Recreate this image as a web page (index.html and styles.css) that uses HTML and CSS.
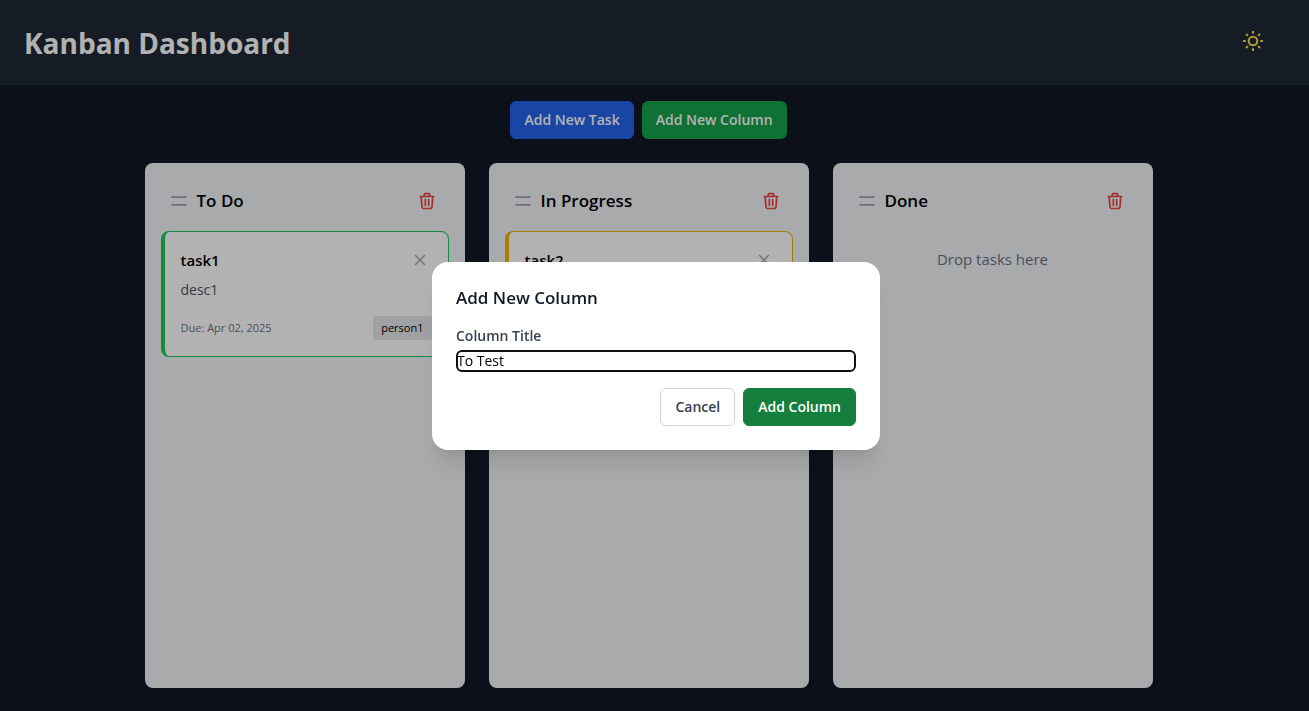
FILE: index.html
```html
<!DOCTYPE html>
<html lang="en">
<head>
<meta charset="utf-8">
<title>Kanban Dashboard</title>
<link rel="stylesheet" href="styles.css">
</head>
<body>
<svg class="sprite" aria-hidden="true">
  <symbol id="grip" viewBox="0 0 20 20"><path d="M3 6.200h14M3 13.800h14" fill="none" stroke="currentColor" stroke-width="1.700" stroke-linecap="round"/></symbol>
  <symbol id="trash" viewBox="0 0 20 20"><path d="M3.300 5.500h13.400M7.300 5.500V3.400Q7.300 2.700 8 2.700h4Q12.700 2.700 12.700 3.400v2.100M4.200 5.500l.8 10.500Q5.200 17.500 6.600 17.500h6.800Q14.800 17.500 15 16l.8-10.500M8.300 8.500v6M11.700 8.500v6" fill="none" stroke="currentColor" stroke-width="1.700" stroke-linecap="round" stroke-linejoin="round"/></symbol>
  <symbol id="cross" viewBox="0 0 16 16"><path d="M3.500 3.500l9 9M12.500 3.500l-9 9" fill="none" stroke="currentColor" stroke-width="1.400" stroke-linecap="round"/></symbol>
</svg>
<div class="app">
  <header class="topbar">
    <h1 class="topbar-title">Kanban Dashboard</h1>
    <button class="theme-button" type="button" aria-label="Toggle theme">
      <svg class="sun" viewBox="0 0 24 24" fill="none" stroke="currentColor" stroke-width="2"><circle cx="12" cy="12" r="4.300"/><path d="M12 2v2.700M12 19.300V22M2 12h2.700M19.300 12H22M5 5l1.900 1.900M17.100 17.100L19 19M5 19l1.900-1.900M17.100 6.900L19 5"/></svg>
    </button>
  </header>
  <main class="main">
    <div class="toolbar">
      <button class="button button-blue" type="button">Add New Task</button>
      <button class="button button-green" type="button">Add New Column</button>
    </div>
    <div class="board">
      <section class="column">
        <div class="column-head">
          <svg class="icon grip"><use href="#grip"/></svg>
          <h2 class="column-title">To Do</h2>
          <button class="icon-button" type="button" aria-label="Delete To Do"><svg class="icon"><use href="#trash"/></svg></button>
        </div>
        <article class="card card-green">
          <div class="card-head">
            <h3 class="card-title">task1</h3>
            <button class="close-button" type="button" aria-label="Delete task1"><svg class="icon-small"><use href="#cross"/></svg></button>
          </div>
          <p class="card-text">desc1</p>
          <div class="card-foot"><span class="due">Due: Apr 02, 2025</span><span class="chip">person1</span></div>
        </article>
      </section>
      <section class="column">
        <div class="column-head">
          <svg class="icon grip"><use href="#grip"/></svg>
          <h2 class="column-title">In Progress</h2>
          <button class="icon-button" type="button" aria-label="Delete In Progress"><svg class="icon"><use href="#trash"/></svg></button>
        </div>
        <article class="card card-yellow">
          <div class="card-head">
            <h3 class="card-title">task2</h3>
            <button class="close-button" type="button" aria-label="Delete task2"><svg class="icon-small"><use href="#cross"/></svg></button>
          </div>
        </article>
      </section>
      <section class="column">
        <div class="column-head">
          <svg class="icon grip"><use href="#grip"/></svg>
          <h2 class="column-title">Done</h2>
          <button class="icon-button" type="button" aria-label="Delete Done"><svg class="icon"><use href="#trash"/></svg></button>
        </div>
        <p class="empty">Drop tasks here</p>
      </section>
    </div>
  </main>
</div>
<div class="overlay">
  <form class="dialog" role="dialog" aria-modal="true" aria-labelledby="dialog-title">
    <h2 class="dialog-title" id="dialog-title">Add New Column</h2>
    <label class="label" for="column-title">Column Title</label>
    <input class="input" id="column-title" type="text" value="To Test">
    <div class="actions">
      <button class="button button-outline" type="button">Cancel</button>
      <button class="button button-dark" type="submit">Add Column</button>
    </div>
  </form>
</div>
</body>
</html>
```

FILE: styles.css
```css
* { box-sizing: border-box; }
body, h1, h2, h3, p { margin: 0; }
body, button, input { font-family: "Segoe UI", "Open Sans", "Noto Sans", sans-serif; }
button { cursor: pointer; }
svg { display: block; }
.sprite { position: absolute; width: 0; height: 0; }

.app { display: flex; flex-direction: column; min-height: 100vh; background: #111827; }
.topbar { display: flex; align-items: center; justify-content: space-between; padding: 25px 40px 24px 24px; background: #1f2937; }
.topbar-title { font-size: 28px; line-height: 36px; font-weight: 700; color: #fff; }
.theme-button { padding: 4px; margin: -4px 0 0; border: 0; background: none; color: #fde047; }
.sun { width: 24px; height: 24px; }

.main { flex: 1; display: flex; flex-direction: column; gap: 24px; padding: 16px 12px 23px 0; }
.toolbar { display: flex; justify-content: center; gap: 8px; }
.button { padding: 8px 13px; border: 1px solid transparent; border-radius: 6px; font-size: 14px; line-height: 20px; font-weight: 600; color: #fff; }
.button-blue { background: #2563eb; border-color: #2563eb; }
.button-green { background: #16a34a; border-color: #16a34a; }
.button-dark { background: #15803d; border-color: #15803d; }
.button-outline { background: #fff; border-color: #d1d5db; color: #374151; }

.board { flex: 1; display: flex; justify-content: center; gap: 24px; }
.column { width: 320px; padding: 16px; border-radius: 8px; background: #f3f4f6; }
.column-head { display: flex; align-items: center; gap: 8px; padding: 8px; margin-bottom: 8px; }
.column-title { flex: 1; font-size: 17px; line-height: 28px; font-weight: 600; color: #000; }
.icon { width: 20px; height: 20px; }
.grip { color: #9ca3af; }
.icon-button { padding: 4px; border: 0; background: none; color: #ef4444; }
.icon-small { width: 16px; height: 16px; }

.card { padding: 16px; border: 1px solid; border-left-width: 4px; border-radius: 8px; background: #fff; }
.card-green { border-color: #22c55e; }
.card-yellow { border-color: #eab308; }
.card-head, .card-foot { display: flex; align-items: center; justify-content: space-between; }
.card-title { font-size: 15px; line-height: 24px; font-weight: 600; color: #000; }
.close-button { padding: 4px; border: 0; background: none; color: #9ca3af; }
.card-text { margin-top: 8px; font-size: 14px; line-height: 20px; color: #4b5563; }
.card-foot { margin-top: 16px; font-size: 11px; line-height: 16px; }
.due { color: #6b7280; }
.chip { padding: 4px 8px; border-radius: 4px; background: #e5e7eb; color: #000; }
.empty { padding: 16px 0; font-size: 15px; line-height: 24px; text-align: center; color: #6b7280; }

.overlay { position: fixed; inset: 0; display: flex; align-items: center; justify-content: center; padding-left: 3px; background: rgba(0, 0, 0, 0.3); }
.dialog { width: 448px; padding: 24px; border-radius: 16px; background: #fff; box-shadow: 0 20px 25px -5px rgba(0, 0, 0, 0.1), 0 8px 10px -6px rgba(0, 0, 0, 0.1); }
.dialog-title { font-size: 17px; line-height: 24px; font-weight: 600; color: #111827; }
.label { display: block; margin: 16px 0 4px; font-size: 14px; line-height: 20px; font-weight: 600; color: #374151; }
.input { display: block; width: 100%; height: 22px; padding: 0 1px; border: 0; border-radius: 6px; outline: 2px solid #101010; outline-offset: -2px; font-size: 14px; color: #000; background: #fff; }
.actions { display: flex; justify-content: flex-end; gap: 8px; margin-top: 16px; }
.actions .button { padding: 8px 14px; }
```
